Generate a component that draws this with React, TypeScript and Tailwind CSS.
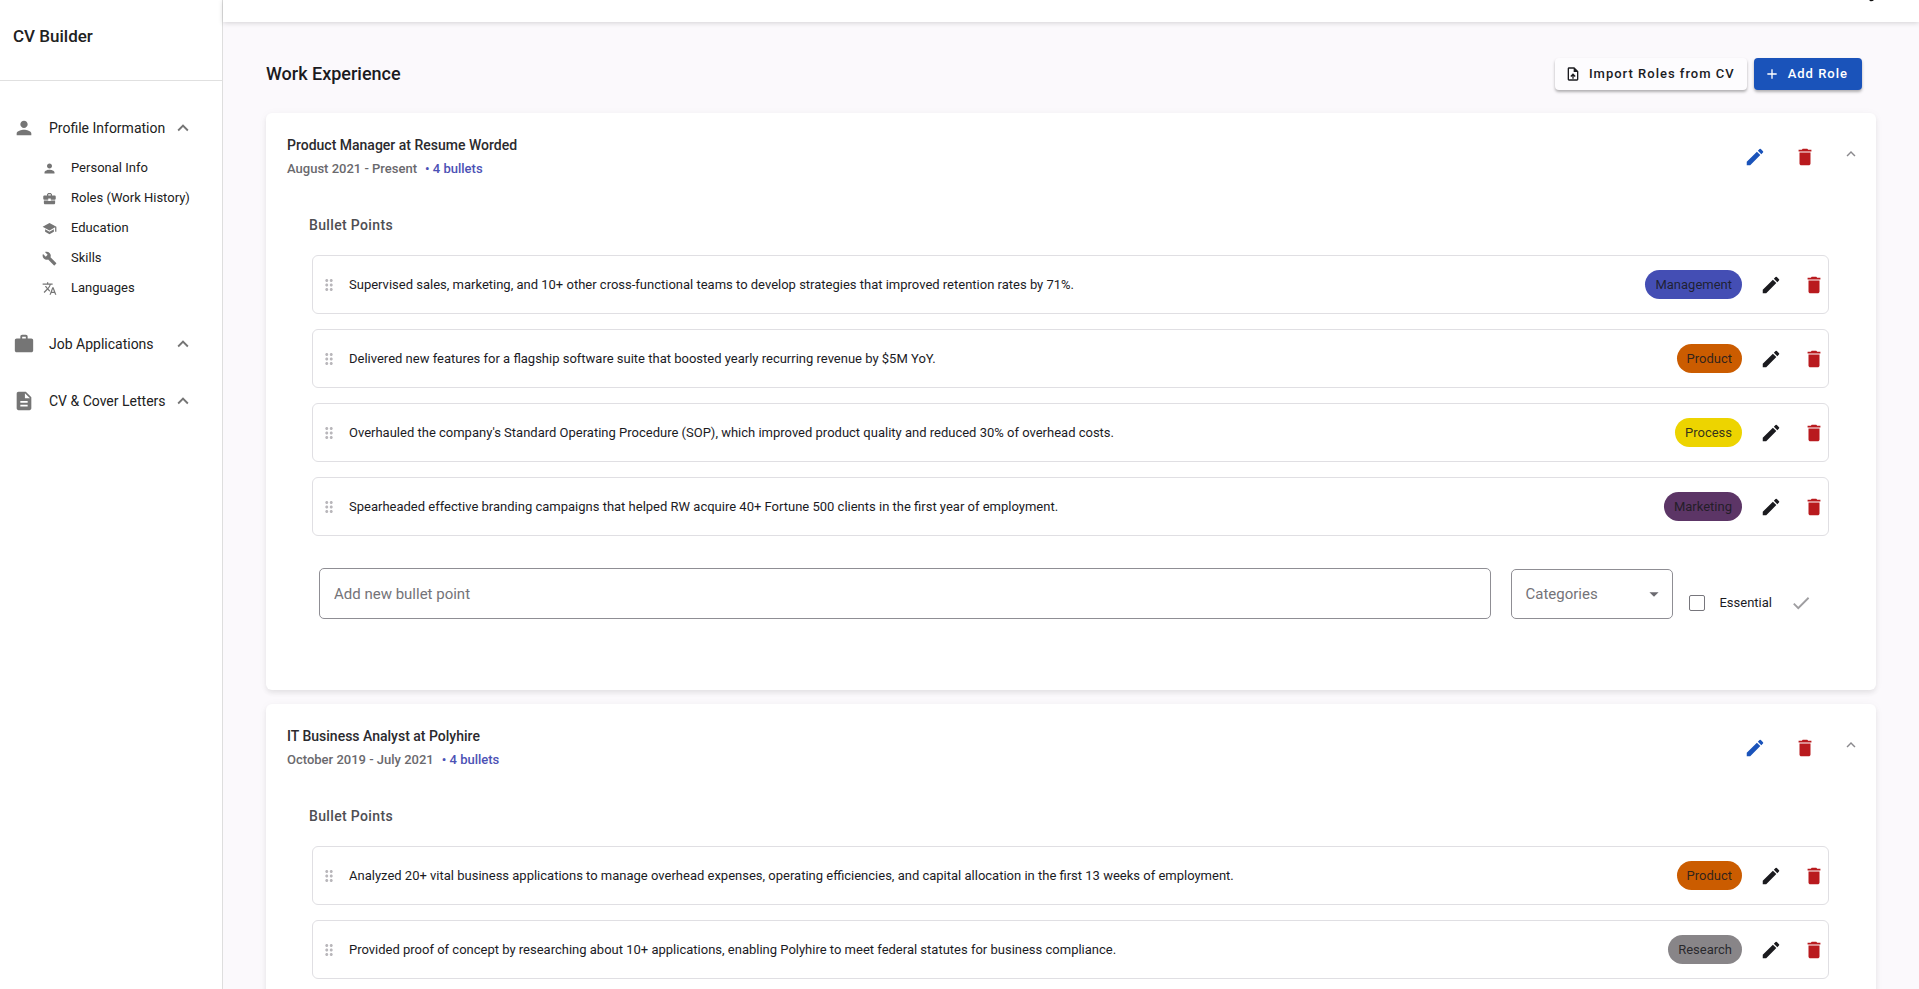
import type { ReactNode } from "react";
import type { IconType } from "react-icons";
import {
  MdAdd,
  MdArrowDropDown,
  MdBuild,
  MdBusinessCenter,
  MdCheck,
  MdDelete,
  MdDescription,
  MdDragIndicator,
  MdEdit,
  MdExpandLess,
  MdPerson,
  MdSchool,
  MdTranslate,
  MdUploadFile,
  MdWork,
} from "react-icons/md";

const chipColors = {
  Management: "bg-[#444eb4]",
  Product: "bg-[#cb5c00]",
  Process: "bg-[#edd400]",
  Marketing: "bg-[#5c3566]",
  Research: "bg-[#888588]",
};

type Category = keyof typeof chipColors;

interface Bullet {
  text: string;
  category: Category;
}

interface Role {
  id: string;
  title: string;
  dates: string;
  bulletCount: number;
  bullets: Bullet[];
}

const roles: Role[] = [
  {
    id: "resume-worded",
    title: "Product Manager at Resume Worded",
    dates: "August 2021 - Present",
    bulletCount: 4,
    bullets: [
      {
        text: "Supervised sales, marketing, and 10+ other cross-functional teams to develop strategies that improved retention rates by 71%.",
        category: "Management",
      },
      {
        text: "Delivered new features for a flagship software suite that boosted yearly recurring revenue by $5M YoY.",
        category: "Product",
      },
      {
        text: "Overhauled the company's Standard Operating Procedure (SOP), which improved product quality and reduced 30% of overhead costs.",
        category: "Process",
      },
      {
        text: "Spearheaded effective branding campaigns that helped RW acquire 40+ Fortune 500 clients in the first year of employment.",
        category: "Marketing",
      },
    ],
  },
  {
    id: "polyhire",
    title: "IT Business Analyst at Polyhire",
    dates: "October 2019 - July 2021",
    bulletCount: 4,
    bullets: [
      {
        text: "Analyzed 20+ vital business applications to manage overhead expenses, operating efficiencies, and capital allocation in the first 13 weeks of employment.",
        category: "Product",
      },
      {
        text: "Provided proof of concept by researching about 10+ applications, enabling Polyhire to meet federal statutes for business compliance.",
        category: "Research",
      },
    ],
  },
];

const profileLinks: { label: string; icon: IconType }[] = [
  { label: "Personal Info", icon: MdPerson },
  { label: "Roles (Work History)", icon: MdBusinessCenter },
  { label: "Education", icon: MdSchool },
  { label: "Skills", icon: MdBuild },
  { label: "Languages", icon: MdTranslate },
];

function NavGroup({ icon: Icon, label, children }: { icon: IconType; label: string; children?: ReactNode }) {
  return (
    <section>
      <button type="button" className="flex h-8 w-full items-center pr-7 pl-[13px] text-left">
        <Icon size={22} className="shrink-0 text-[#757575]" />
        <span className="ml-[14px] flex-1 text-sm whitespace-nowrap">{label}</span>
        <MdExpandLess size={22} className="shrink-0 text-[#757575]" />
      </button>
      {children}
    </section>
  );
}

function Sidebar() {
  return (
    <aside className="w-[223px] shrink-0 border-r border-[#dedede] bg-white text-[#212121]">
      <div className="flex h-[81px] items-center border-b border-[#e0e0e0] px-[13px] pb-[6px]">
        <span className="text-[17px] font-medium">CV Builder</span>
      </div>
      <nav className="flex flex-col gap-[25px] pt-[31px]">
        <NavGroup icon={MdPerson} label="Profile Information">
          <ul className="mt-[9px]">
            {profileLinks.map(({ label, icon: Icon }) => (
              <li key={label}>
                <a href="#" className="flex h-[30px] items-center gap-[14px] pl-[42px] text-[13px]">
                  <Icon size={15} className="text-[#757575]" />
                  {label}
                </a>
              </li>
            ))}
          </ul>
        </NavGroup>
        <NavGroup icon={MdWork} label="Job Applications" />
        <NavGroup icon={MdDescription} label="CV & Cover Letters" />
      </nav>
    </aside>
  );
}

function BulletRow({ bullet }: { bullet: Bullet }) {
  return (
    <li className="flex h-[59px] items-center rounded-md border border-[#e0dfe3] pr-[3px] pl-[7px]">
      <MdDragIndicator size={18} className="shrink-0 text-[#b9b7bb]" />
      <p className="ml-[11px] flex-1 text-[13px]">{bullet.text}</p>
      <span
        className={`flex h-[29px] items-center rounded-full px-[10px] text-[13px] text-[#1b1b1f]/90 ${chipColors[bullet.category]}`}
      >
        {bullet.category}
      </span>
      <button type="button" aria-label="Edit bullet" className="ml-[18px]">
        <MdEdit size={22} />
      </button>
      <button type="button" aria-label="Delete bullet" className="ml-[21px] text-[#b91a1e]">
        <MdDelete size={22} />
      </button>
    </li>
  );
}

function AddBulletForm({ roleId }: { roleId: string }) {
  return (
    <form className="mt-8 flex items-start pl-[10px]">
      <input
        type="text"
        aria-label="Add new bullet point"
        placeholder="Add new bullet point"
        className="h-[51px] min-w-0 flex-1 rounded-[5px] border border-[#8f8e94] bg-transparent px-[14px] text-[15px] placeholder:text-[#747378]"
      />
      <div className="relative ml-5">
        <select
          aria-label="Categories"
          defaultValue=""
          className="mt-px h-[50px] w-[162px] appearance-none rounded-[5px] border border-[#8f8e94] bg-transparent px-[13px] text-[15px] text-[#747378]"
        >
          <option value="">Categories</option>
          {Object.keys(chipColors).map((name) => (
            <option key={name}>{name}</option>
          ))}
        </select>
        <MdArrowDropDown size={22} className="pointer-events-none absolute top-[15px] right-2 text-[#6b6a70]" />
      </div>
      <div className="mt-[25px] ml-4 flex h-5 items-center">
        <input
          id={`${roleId}-essential`}
          type="checkbox"
          className="size-4 appearance-none rounded-[2px] border border-[#77767c] checked:bg-[#1a53ba]"
        />
        <label htmlFor={`${roleId}-essential`} className="ml-[14px] text-[13px]">
          Essential
        </label>
        <button type="button" aria-label="Save bullet" className="mr-[17px] ml-[18px] text-[#9f9ea1]">
          <MdCheck size={22} />
        </button>
      </div>
    </form>
  );
}

function RoleCard({ role }: { role: Role }) {
  const allBulletsLoaded = role.bullets.length === role.bulletCount;

  return (
    <article className="rounded-md bg-white pt-5 pr-4 pb-[71px] pl-[21px] shadow-[0_3px_5px_rgba(0,0,0,0.07),0_1px_10px_rgba(0,0,0,0.04)]">
      <header className="flex items-center">
        <div className="flex-1">
          <h2 className="text-sm leading-6 font-medium text-[#2b2a2e]">{role.title}</h2>
          <p className="text-[13px] leading-6 font-medium text-[#6a696d]">
            {role.dates}
            <span className="ml-2 text-[#4c51b5]">• {role.bulletCount} bullets</span>
          </p>
        </div>
        <button type="button" aria-label="Edit role" className="text-[#1a53ba]">
          <MdEdit size={22} />
        </button>
        <button type="button" aria-label="Delete role" className="ml-7 text-[#b91a1e]">
          <MdDelete size={22} />
        </button>
        <button type="button" aria-label="Collapse role" className="mb-[6px] ml-[26px] text-[#8a898d]">
          <MdExpandLess size={18} />
        </button>
      </header>
      <div className="pt-[34px] pr-[31px] pl-[22px]">
        <h3 className="text-sm leading-5 font-medium tracking-wide text-[#4f4e53]">Bullet Points</h3>
        <ul className="mt-5 ml-[3px] flex flex-col gap-[15px]">
          {role.bullets.map((bullet) => (
            <BulletRow key={bullet.text} bullet={bullet} />
          ))}
        </ul>
        {allBulletsLoaded && <AddBulletForm roleId={role.id} />}
      </div>
    </article>
  );
}

export default function App() {
  return (
    <div className="flex h-screen overflow-hidden bg-[#fbf9fc] font-['Roboto',sans-serif] text-[#1b1b1f]">
      <Sidebar />
      <div className="flex min-w-0 flex-1 flex-col">
        <div className="z-10 flex h-[22px] shrink-0 justify-end bg-white pr-[45px] shadow-[0_1px_5px_rgba(0,0,0,0.16)]">
          <svg width="5" height="2" viewBox="0 0 5 2" aria-hidden="true">
            <path d="M0 0H5Q3.500 1.500 1.500 1.200Z" fill="#111" />
          </svg>
        </div>
        <main className="min-h-0 flex-1 overflow-hidden px-[43px]">
          <div className="flex items-center gap-[7px] pt-9 pr-[14px] pb-[23px]">
            <h1 className="flex-1 text-[18px] leading-8 font-medium">Work Experience</h1>
            <button
              type="button"
              className="flex h-8 items-center gap-2 rounded bg-[#fdfcfe] pr-3 pl-[10px] text-[13px] font-medium tracking-[1px] shadow-[0_2px_3px_rgba(0,0,0,0.3)]"
            >
              <MdUploadFile size={16} />
              Import Roles from CV
            </button>
            <button
              type="button"
              className="flex h-8 items-center gap-2 rounded bg-[#1a53ba] pr-[14px] pl-[10px] text-[13px] font-medium tracking-[1px] text-white shadow-[0_2px_3px_rgba(0,0,0,0.3)]"
            >
              <MdAdd size={16} />
              Add Role
            </button>
          </div>
          <div className="flex flex-col gap-[14px]">
            {roles.map((role) => (
              <RoleCard key={role.id} role={role} />
            ))}
          </div>
        </main>
      </div>
    </div>
  );
}
